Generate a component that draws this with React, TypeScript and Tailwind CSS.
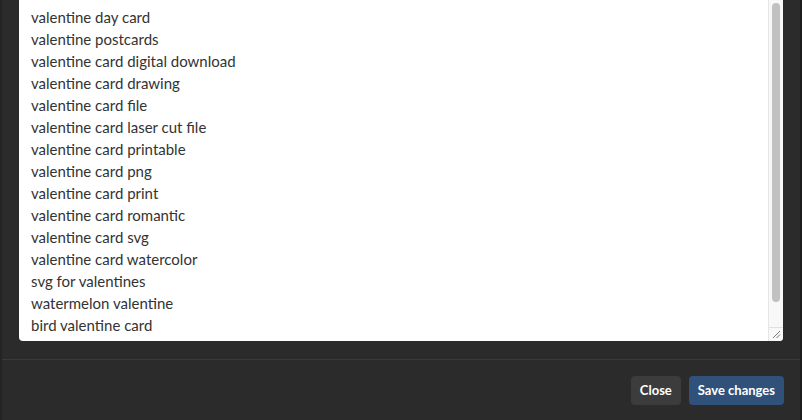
const keywords = [
  "valentine day card",
  "valentine postcards",
  "valentine card digital download",
  "valentine card drawing",
  "valentine card file",
  "valentine card laser cut file",
  "valentine card printable",
  "valentine card png",
  "valentine card print",
  "valentine card romantic",
  "valentine card svg",
  "valentine card watercolor",
  "svg for valentines",
  "watermelon valentine",
  "bird valentine card",
];

export default function App() {
  return (
    <div className="h-[420px] w-[802px] flex flex-col bg-[#2b2b2b] border-l-2 border-r-2 border-l-[#242424] border-r-[#1c1c1c] font-['Lato','Liberation_Sans',sans-serif] overflow-hidden">
      {/* Modal body */}
      <div className="flex h-[359px] flex-col px-[17px] pb-[18px]">
        <div className="flex flex-1 overflow-hidden rounded-b-[4px] bg-white">
          <div className="flex-1 pl-[12px] pt-[6px] text-[15px] leading-[22px] text-[#333333]">
            {keywords.map((k) => (
              <div key={k}>{k}</div>
            ))}
          </div>
          {/* Scrollbar */}
          <div className="flex w-[15px] flex-col border-l border-[#e6e6e6] bg-[#f8f8f8]">
            <div className="flex-1 px-[3px] pt-[3px]">
              <div className="h-[299px] w-[8px] rounded-full bg-[#c1c1c1]" />
            </div>
            <div className="flex h-[14px] items-end justify-end border-t border-[#e0e0e0] bg-[#f8f8f8] p-[2px]">
              <svg width="9" height="9" viewBox="0 0 9 9">
                <path d="M8 1 L1 8 M8 4.5 L4.5 8" stroke="#777" strokeWidth="1" />
              </svg>
            </div>
          </div>
        </div>
      </div>

      {/* Modal footer */}
      <div className="flex flex-1 items-start justify-end gap-2 border-t border-[#3a3a3a] px-4 pt-4">
        <button className="h-[29px] rounded-[4px] bg-[#3c3c3c] px-[9px] text-[13px] font-bold text-white">
          Close
        </button>
        <button className="h-[29px] rounded-[4px] bg-[#30517a] px-[9px] text-[13px] font-bold text-white">
          Save changes
        </button>
      </div>
    </div>
  );
}
